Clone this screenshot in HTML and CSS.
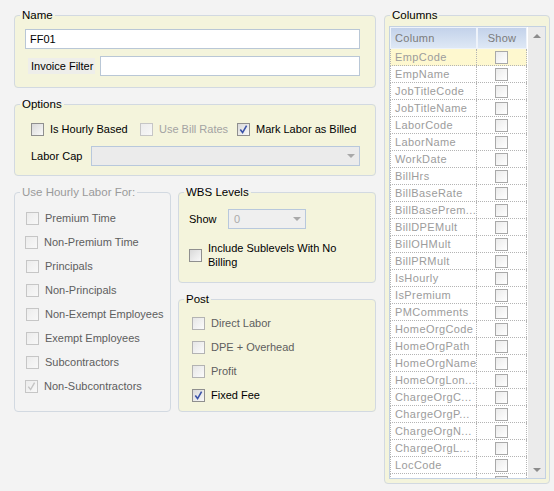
FILE: index.html
```html
<!DOCTYPE html>
<html>
<head>
<meta charset="utf-8">
<link rel="stylesheet" href="styles.css">
</head>
<body>
<div class="page">
  <div class="left">
    <fieldset class="fs">
      <legend>Name</legend>
      <div class="inner name-inner">
        <div class="text-input">FF01</div>
        <div class="filter-row">
          <span class="lbl-box">Invoice Filter</span>
          <div class="text-input grow"></div>
        </div>
      </div>
    </fieldset>

    <fieldset class="fs">
      <legend>Options</legend>
      <div class="inner opt-inner">
        <div class="opt-row">
          <div class="check w1"><span class="cb"></span><span class="cl">Is Hourly Based</span></div>
          <div class="check w2"><span class="cb dis"></span><span class="cl muted">Use Bill Rates</span></div>
          <div class="check"><span class="cb"><svg viewBox="0 0 11 11" width="11" height="11"><path d="M2.3 5.6 L4.6 8.6 L8.6 1.6" fill="none" stroke="#3b53a8" stroke-width="1.6"/></svg></span><span class="cl">Mark Labor as Billed</span></div>
        </div>
        <div class="cap-row">
          <span class="cap-lbl">Labor Cap</span>
          <div class="combo grow"><span class="arrow"></span></div>
        </div>
      </div>
    </fieldset>

    <div class="split">
      <fieldset class="fs plain hourly">
        <legend class="grey">Use Hourly Labor For:</legend>
        <div class="inner hourly-inner">
          <div class="check row"><span class="cb dis"></span><span class="cl mid">Premium Time</span></div>
          <div class="check row shift"><span class="cb dis"></span><span class="cl mid">Non-Premium Time</span></div>
          <div class="check row"><span class="cb dis"></span><span class="cl mid">Principals</span></div>
          <div class="check row"><span class="cb dis"></span><span class="cl mid">Non-Principals</span></div>
          <div class="check row"><span class="cb dis"></span><span class="cl mid">Non-Exempt Employees</span></div>
          <div class="check row"><span class="cb dis"></span><span class="cl mid">Exempt Employees</span></div>
          <div class="check row"><span class="cb dis"></span><span class="cl mid">Subcontractors</span></div>
          <div class="check row shift"><span class="cb dis"><svg viewBox="0 0 11 11" width="11" height="11"><path d="M2.3 5.6 L4.6 8.6 L8.6 1.6" fill="none" stroke="#c4c4c4" stroke-width="1.4"/></svg></span><span class="cl mid">Non-Subcontractors</span></div>
        </div>
      </fieldset>

      <div class="stack">
        <fieldset class="fs">
          <legend>WBS Levels</legend>
          <div class="inner wbs-inner">
            <div class="show-row">
              <span class="show-lbl">Show</span>
              <div class="combo small"><span class="val">0</span><span class="arrow"></span></div>
            </div>
            <div class="sub-row">
              <span class="cb"></span>
              <span class="sub-text">Include Sublevels With No Billing</span>
            </div>
          </div>
        </fieldset>

        <fieldset class="fs post">
          <legend>Post</legend>
          <div class="inner post-inner">
            <div class="check row"><span class="cb lite"></span><span class="cl mid">Direct Labor</span></div>
            <div class="check row"><span class="cb lite"></span><span class="cl mid">DPE + Overhead</span></div>
            <div class="check row"><span class="cb lite"></span><span class="cl mid">Profit</span></div>
            <div class="check row"><span class="cb"><svg viewBox="0 0 11 11" width="11" height="11"><path d="M2.3 5.6 L4.6 8.6 L8.6 1.6" fill="none" stroke="#3b53a8" stroke-width="1.6"/></svg></span><span class="cl">Fixed Fee</span></div>
          </div>
        </fieldset>
      </div>
    </div>
  </div>

  <fieldset class="fs columns">
    <legend>Columns</legend>
    <div class="inner col-inner">
      <div class="grid">
        <div class="gmain">
          <div class="ghead">
            <div class="hcell c1">Column</div>
            <div class="hcell c2">Show</div>
          </div>
          <div class="gbody">
            <div class="grow-row sel"><div class="gc c1">EmpCode</div><div class="gc c2"><span class="cb g"></span></div></div>
            <div class="grow-row"><div class="gc c1">EmpName</div><div class="gc c2"><span class="cb g"></span></div></div>
            <div class="grow-row"><div class="gc c1">JobTitleCode</div><div class="gc c2"><span class="cb g"></span></div></div>
            <div class="grow-row"><div class="gc c1">JobTitleName</div><div class="gc c2"><span class="cb g"></span></div></div>
            <div class="grow-row"><div class="gc c1">LaborCode</div><div class="gc c2"><span class="cb g"></span></div></div>
            <div class="grow-row"><div class="gc c1">LaborName</div><div class="gc c2"><span class="cb g"></span></div></div>
            <div class="grow-row"><div class="gc c1">WorkDate</div><div class="gc c2"><span class="cb g"></span></div></div>
            <div class="grow-row"><div class="gc c1">BillHrs</div><div class="gc c2"><span class="cb g"></span></div></div>
            <div class="grow-row"><div class="gc c1">BillBaseRate</div><div class="gc c2"><span class="cb g"></span></div></div>
            <div class="grow-row"><div class="gc c1">BillBasePrem...</div><div class="gc c2"><span class="cb g"></span></div></div>
            <div class="grow-row"><div class="gc c1">BillDPEMult</div><div class="gc c2"><span class="cb g"></span></div></div>
            <div class="grow-row"><div class="gc c1">BillOHMult</div><div class="gc c2"><span class="cb g"></span></div></div>
            <div class="grow-row"><div class="gc c1">BillPRMult</div><div class="gc c2"><span class="cb g"></span></div></div>
            <div class="grow-row"><div class="gc c1">IsHourly</div><div class="gc c2"><span class="cb g"></span></div></div>
            <div class="grow-row"><div class="gc c1">IsPremium</div><div class="gc c2"><span class="cb g"></span></div></div>
            <div class="grow-row"><div class="gc c1">PMComments</div><div class="gc c2"><span class="cb g"></span></div></div>
            <div class="grow-row"><div class="gc c1">HomeOrgCode</div><div class="gc c2"><span class="cb g"></span></div></div>
            <div class="grow-row"><div class="gc c1">HomeOrgPath</div><div class="gc c2"><span class="cb g"></span></div></div>
            <div class="grow-row"><div class="gc c1">HomeOrgName</div><div class="gc c2"><span class="cb g"></span></div></div>
            <div class="grow-row"><div class="gc c1">HomeOrgLon...</div><div class="gc c2"><span class="cb g"></span></div></div>
            <div class="grow-row"><div class="gc c1">ChargeOrgC...</div><div class="gc c2"><span class="cb g"></span></div></div>
            <div class="grow-row"><div class="gc c1">ChargeOrgP...</div><div class="gc c2"><span class="cb g"></span></div></div>
            <div class="grow-row"><div class="gc c1">ChargeOrgN...</div><div class="gc c2"><span class="cb g"></span></div></div>
            <div class="grow-row"><div class="gc c1">ChargeOrgL...</div><div class="gc c2"><span class="cb g"></span></div></div>
            <div class="grow-row"><div class="gc c1">LocCode</div><div class="gc c2"><span class="cb g"></span></div></div>
            <div class="grow-row"><div class="gc c1">LocName</div><div class="gc c2"><span class="cb g"></span></div></div>
          </div>
        </div>
        <div class="scrollbar">
          <span class="sarrow up"></span>
          <span class="sarrow down"></span>
        </div>
      </div>
    </div>
  </fieldset>
</div>
</body>
</html>
```

FILE: styles.css
```css
html, body {
  margin: 0;
  padding: 0;
}
body {
  background: #f3f3f3;
  font: 11px/14px "Liberation Sans", Arial, sans-serif;
  color: #000;
  width: 554px;
  height: 491px;
  overflow: hidden;
}
.page {
  display: flex;
  align-items: flex-start;
  gap: 8px;
  padding: 8px 0 0 14px;
}
.left {
  width: 362px;
  display: flex;
  flex-direction: column;
  gap: 9px;
}
.fs {
  margin: 0;
  padding: 0;
  min-width: 0;
  border: 1px solid #d2d9e1;
  border-radius: 4px;
  background: #f4f4dc;
  box-sizing: border-box;
}
.fs.plain {
  background: transparent;
}
.fs legend {
  margin-left: 5px;
  padding: 0 2px;
  line-height: 14px;
  font-size: 11.5px;
}
.fs legend.grey {
  color: #9a9a9a;
}
.grow {
  flex: 1;
}

/* Name */
.name-inner {
  padding: 7px 15px 11px 10px;
}
.text-input {
  height: 20px;
  box-sizing: border-box;
  border: 1px solid #b9c7d6;
  background: #fff;
  padding: 0 4px;
  line-height: 18px;
}
.filter-row {
  display: flex;
  align-items: center;
  gap: 5px;
  margin-top: 7px;
}
.lbl-box {
  width: 67px;
  margin-left: 3px;
  box-sizing: border-box;
  padding: 0 2px 0 3px;
  height: 16px;
  line-height: 16px;
  background: #eeeeea;
  white-space: nowrap;
}

/* Options */
.opt-inner {
  padding: 10px 15px 9px 16px;
}
.opt-row {
  display: flex;
  height: 16px;
  align-items: center;
}
.check {
  display: flex;
  align-items: center;
}
.check .cl {
  margin-left: 6px;
  white-space: nowrap;
}
.w1 { width: 109px; }
.w2 { width: 97px; }
.muted { color: #a3a3a3; }
.mid { color: #5e5e5e; }
.cap-row {
  display: flex;
  align-items: center;
  margin-top: 9px;
}
.cap-lbl {
  width: 60px;
}
.combo {
  position: relative;
  height: 20px;
  box-sizing: border-box;
  border: 1px solid #b8c8dc;
  background: #ebebeb;
}
.combo.small {
  width: 78px;
  background: #efefef;
}
.combo .val {
  display: block;
  padding-left: 5px;
  line-height: 18px;
  color: #ababab;
}
.combo .arrow {
  position: absolute;
  right: 4px;
  top: 7px;
  width: 0;
  height: 0;
  border-left: 4px solid transparent;
  border-right: 4px solid transparent;
  border-top: 4px solid #a9a9a9;
}

/* checkbox */
.cb {
  flex: none;
  width: 13px;
  height: 13px;
  box-sizing: border-box;
  border: 1px solid #8f8f8f;
  background: linear-gradient(135deg, #d9d9d9, #f9f9f9);
  display: inline-flex;
  align-items: center;
  justify-content: center;
}
.cb svg { display: block; }
.cb.dis {
  border-color: #c6c6c6;
  background: linear-gradient(135deg, #ececec, #f8f8f8);
}
.cb.lite {
  border-color: #b3b3b3;
  background: linear-gradient(135deg, #e6e6e6, #fbfbfb);
}

/* bottom split */
.split {
  display: flex;
  gap: 7px;
  align-items: stretch;
}
.hourly {
  width: 157px;
}
.hourly-inner {
  padding: 7px 4px 8px 11px;
}
.row {
  height: 24px;
}
.row.shift {
  margin-left: -1px;
}
.stack {
  width: 198px;
  display: flex;
  flex-direction: column;
  gap: 9px;
}
.wbs-inner {
  padding: 10px 10px 13px 10px;
}
.show-row {
  display: flex;
  align-items: center;
}
.show-lbl {
  width: 39px;
}
.sub-row {
  display: flex;
  align-items: center;
  margin-top: 12px;
}
.sub-text {
  margin-left: 6px;
  width: 135px;
  line-height: 14px;
}
.post-inner {
  padding: 5px 10px 4px 13px;
}

/* Columns */
.columns {
  width: 166px;
  height: 476px;
}
.col-inner {
  padding: 4px 3px 0 4px;
}
.grid {
  height: 453px;
  box-sizing: border-box;
  border: 1px solid #c3d1e2;
  background: #fff;
  display: flex;
  gap: 1px;
}
.gmain {
  width: 137px;
  display: flex;
  flex-direction: column;
  overflow: hidden;
}
.ghead {
  display: flex;
  height: 22px;
  flex: none;
}
.hcell {
  box-sizing: border-box;
  border: 1px solid #eef3fa;
  background: linear-gradient(#c3d2ea, #dee8f5);
  color: #7b7b7b;
  line-height: 20px;
  white-space: nowrap;
  letter-spacing: 0.3px;
}
.hcell.c1 {
  width: 87px;
  padding-left: 4px;
}
.hcell.c2 {
  width: 50px;
  text-align: center;
}
.gbody {
  flex: 1;
  overflow: hidden;
}
.grow-row {
  display: flex;
  height: 17px;
  box-sizing: border-box;
  border-bottom: 1px dotted #b4b4b4;
  border-left: 1px dotted #b4b4b4;
}
.grow-row.sel {
  background: #fef8cf;
}
.gc {
  box-sizing: border-box;
  border-right: 1px dotted #b4b4b4;
  height: 16px;
}
.gc.c1 {
  width: 86px;
  padding-left: 4px;
  color: #9c9c9c;
  line-height: 16px;
  white-space: nowrap;
  overflow: hidden;
  letter-spacing: 0.4px;
}
.gc.c2 {
  width: 50px;
  display: flex;
  align-items: center;
  justify-content: center;
}
.cb.g {
  border-color: #a9a9a9;
  background: linear-gradient(135deg, #ebebeb, #ffffff);
}
.scrollbar {
  width: 17px;
  background: #ebebeb;
  display: flex;
  flex-direction: column;
  justify-content: space-between;
  align-items: center;
  padding: 7px 0 6px;
  box-sizing: border-box;
}
.sarrow {
  width: 0;
  height: 0;
  border-left: 4px solid transparent;
  border-right: 4px solid transparent;
}
.sarrow.up {
  border-bottom: 4px solid #8c8c8c;
}
.sarrow.down {
  border-top: 4px solid #8c8c8c;
}
```
